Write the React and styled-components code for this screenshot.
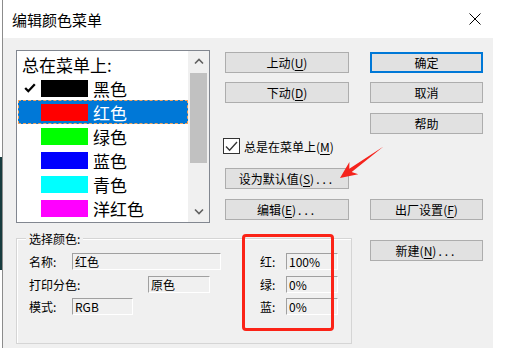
import React from 'react'
import styled, { createGlobalStyle } from 'styled-components'

const GlobalStyle = createGlobalStyle`
  * { box-sizing: border-box; }
  html, body { margin: 0; padding: 0; background: #fff; }
  body { font-family: "Noto Sans CJK SC", "Noto Sans", sans-serif; color: #000; }
`

const colors = [
  { name: '黑色', swatch: '#000000', checked: true },
  { name: '红色', swatch: '#ff0000', selected: true },
  { name: '绿色', swatch: '#00ff00' },
  { name: '蓝色', swatch: '#0000ff' },
  { name: '青色', swatch: '#00ffff' },
  { name: '洋红色', swatch: '#ff00ff' },
  { name: '黄色', swatch: '#ffff00' },
]

// Styled components
const Screen = styled.div`
  position: relative;
  width: 506px;
  height: 356px;
  overflow: hidden;
  display: flex;
  background: #fff;
`

const LeftStrip = styled.div`
  width: 2px;
  background: linear-gradient(to bottom, #fff 0 157px, #173c3f 157px 270px, #fff 270px);
`

const Window = styled.div`
  width: 491px;
  height: 348px;
  border-left: 1px solid #8c8c8c;
  display: flex;
  flex-direction: column;
`

const TitleBar = styled.div`
  height: 38px;
  background: #fff;
  display: flex;
  align-items: center;
  justify-content: space-between;
  padding: 0 12px 0 9px;
  font-size: 15px;
  line-height: 1;
`

const Body = styled.div`
  height: 310px;
  background: #f0f0f0;
  padding: 12px 0 0 13px;
  display: flex;
  gap: 18px;
  font-size: 12px;
`

const LeftCol = styled.div`
  width: 336px;
  display: flex;
  flex-direction: column;
`

const TopRow = styled.div`
  display: flex;
  gap: 15px;
`

const ListBox = styled.div`
  width: 194px;
  height: 173px;
  border: 1px solid #828790;
  background: #fff;
  display: flex;
  overflow: hidden;
`

const ListItems = styled.div`
  width: 171px;
  padding: 1px 0 0 1px;
  display: flex;
  flex-direction: column;
  overflow: hidden;
`

const ListHeader = styled.div`
  height: 24px;
  flex-shrink: 0;
  display: flex;
  align-items: center;
  padding-left: 4px;
  font-size: 17px;
`

const ListItem = styled.div`
  height: 24px;
  flex-shrink: 0;
  display: flex;
  align-items: center;
  font-size: 17px;
  border: 1px dashed ${p => (p.$selected ? '#f3a35c' : 'transparent')};
  background: ${p => (p.$selected ? '#0078d7' : 'transparent')};
  color: ${p => (p.$selected ? '#fff' : '#000')};
`

const CheckCell = styled.div`
  width: 22px;
  display: flex;
  justify-content: center;
  align-items: center;
`

const Swatch = styled.div`
  width: 47px;
  height: 17px;
  margin-right: 5px;
  background: ${p => p.$color};
`

const ScrollBar = styled.div`
  width: 21px;
  background: #f0f0f0;
  display: flex;
  flex-direction: column;
`

const ScrollButton = styled.div`
  height: 21px;
  display: flex;
  align-items: center;
  justify-content: center;
`

const ScrollThumb = styled.div`
  margin: 1px 2px 0;
  height: 90px;
  background: #c1c1c1;
`

const ScrollSpace = styled.div`
  flex: 1;
`

const ButtonCol = styled.div`
  width: ${p => p.$w}px;
  display: flex;
  flex-direction: column;
`

const Button = styled.div`
  height: 21px;
  margin-top: ${p => p.$mt || 0}px;
  background: #e1e1e1;
  border: 1px solid ${p => (p.$primary ? '#0078d7' : '#adadad')};
  box-shadow: ${p => (p.$primary ? 'inset 0 0 0 1px #0078d7' : 'none')};
  display: flex;
  align-items: center;
  justify-content: center;
  font-size: 12px;
  white-space: nowrap;

  u { text-underline-offset: 2px; }
`

const Dots = styled.span`
  letter-spacing: 3px;
  margin-left: 2px;
`

const CheckRow = styled.div`
  margin: 35px 0 0 -2px;
  height: 16px;
  display: flex;
  align-items: center;
  gap: 4px;
  white-space: nowrap;

  u { text-underline-offset: 2px; }
`

const CheckBox = styled.div`
  width: 17px;
  height: 16px;
  border: 1px solid #333;
  background: #fff;
  display: flex;
  align-items: center;
  justify-content: center;
`

const GroupBox = styled.div`
  position: relative;
  margin-top: 15px;
  width: 336px;
  height: 106px;
  border: 1px solid #d5d5d5;
  box-shadow: inset 1px 1px 0 #fff;
`

const Legend = styled.div`
  position: absolute;
  top: -9px;
  left: 9px;
  padding: 0 3px;
  line-height: 17px;
  background: #f0f0f0;
`

const GroupContent = styled.div`
  display: flex;
  padding: 14px 0 0 12px;
`

const Fields = styled.div`
  width: ${p => (p.$w ? `${p.$w}px` : 'auto')};
  display: grid;
  grid-auto-rows: 17px;
  row-gap: 5.5px;
`

const FieldRow = styled.div`
  display: flex;
  align-items: center;
`

const FieldLabel = styled.div`
  width: ${p => p.$w}px;
  white-space: nowrap;
`

const Field = styled.div`
  width: ${p => p.$w}px;
  height: 17px;
  background: #f0f0f0;
  border-top: 1px solid #a0a0a0;
  border-left: 1px solid #a0a0a0;
  border-right: 1px solid #fff;
  border-bottom: 1px solid #fff;
  padding-left: 2px;
  line-height: 15px;
  font-size: 12px;
  white-space: nowrap;
`

const RedFrame = styled.div`
  position: absolute;
  left: 242px;
  top: 234px;
  width: 92px;
  height: 97px;
  border: 3px solid #fb2317;
  border-radius: 4px;
`

const Arrow = styled.svg`
  position: absolute;
  left: 336px;
  top: 143px;
`

const Chevron = ({ down }) => (
  <svg width="10" height="7" viewBox="0 0 10 7">
    <path
      d={down ? 'M1 1.5 L5 5.5 L9 1.5' : 'M1 5.5 L5 1.5 L9 5.5'}
      fill="none"
      stroke="#606060"
      strokeWidth="1.6"
    />
  </svg>
)

const Btn = ({ label, letter, dots, ...rest }) => (
  <Button {...rest}>
    {label}
    {letter && (
      <>
        (<u>{letter}</u>)
      </>
    )}
    {dots && <Dots>...</Dots>}
  </Button>
)

const App = () => {
  return (
    <Screen>
      <GlobalStyle />
      <LeftStrip />
      <Window>
        <TitleBar>
          <span>编辑颜色菜单</span>
          <svg width="12" height="12" viewBox="0 0 12 12">
            <path d="M0.5 0.5 L11.5 11.5 M11.5 0.5 L0.5 11.5" stroke="#000" strokeWidth="1" />
          </svg>
        </TitleBar>
        <Body>
          <LeftCol>
            <TopRow>
              <ListBox>
                <ListItems>
                  <ListHeader>总在菜单上:</ListHeader>
                  {colors.map(c => (
                    <ListItem key={c.name} $selected={c.selected}>
                      <CheckCell>
                        {c.checked && (
                          <svg width="12" height="10" viewBox="0 0 12 10">
                            <path d="M1.2 5 L4.3 8.2 L10.8 1.2" fill="none" stroke="#000" strokeWidth="2.3" />
                          </svg>
                        )}
                      </CheckCell>
                      <Swatch $color={c.swatch} />
                      {c.name}
                    </ListItem>
                  ))}
                </ListItems>
                <ScrollBar>
                  <ScrollButton><Chevron /></ScrollButton>
                  <ScrollThumb />
                  <ScrollSpace />
                  <ScrollButton><Chevron down /></ScrollButton>
                </ScrollBar>
              </ListBox>
              <ButtonCol $w={124}>
                <Btn $mt={2} label="上动" letter="U" />
                <Btn $mt={9} label="下动" letter="D" />
                <CheckRow>
                  <CheckBox>
                    <svg width="13" height="11" viewBox="0 0 13 11">
                      <path d="M1 5.5 L4.6 9.3 L12 1" fill="none" stroke="#333" strokeWidth="1.3" />
                    </svg>
                  </CheckBox>
                  <span>
                    总是在菜单上(<u>M</u>)
                  </span>
                </CheckRow>
                <Btn $mt={14} label="设为默认值" letter="S" dots />
                <Btn $mt={10} label="编辑" letter="E" dots />
              </ButtonCol>
            </TopRow>
            <GroupBox>
              <Legend>选择颜色:</Legend>
              <GroupContent>
                <Fields $w={231}>
                  <FieldRow>
                    <FieldLabel $w={43}>名称:</FieldLabel>
                    <Field $w={149}>红色</Field>
                  </FieldRow>
                  <FieldRow>
                    <FieldLabel $w={119}>打印分色:</FieldLabel>
                    <Field $w={62}>原色</Field>
                  </FieldRow>
                  <FieldRow>
                    <FieldLabel $w={43}>模式:</FieldLabel>
                    <Field $w={61}>RGB</Field>
                  </FieldRow>
                </Fields>
                <Fields>
                  <FieldRow>
                    <FieldLabel $w={26}>红:</FieldLabel>
                    <Field $w={52}>100%</Field>
                  </FieldRow>
                  <FieldRow>
                    <FieldLabel $w={26}>绿:</FieldLabel>
                    <Field $w={52}>0%</Field>
                  </FieldRow>
                  <FieldRow>
                    <FieldLabel $w={26}>蓝:</FieldLabel>
                    <Field $w={52}>0%</Field>
                  </FieldRow>
                </Fields>
              </GroupContent>
            </GroupBox>
          </LeftCol>
          <ButtonCol $w={113}>
            <Btn $mt={2} $primary label="确定" />
            <Btn $mt={9} label="取消" />
            <Btn $mt={10} label="帮助" />
            <Btn $mt={65} label="出厂设置" letter="F" />
            <Btn $mt={20} label="新建" letter="N" dots />
          </ButtonCol>
        </Body>
      </Window>

      <RedFrame />
      <Arrow width="52" height="40" viewBox="0 0 52 40">
        <polygon
          points="47.5,3.5 15.7,29 22.2,31.2 4,35 13.4,19 13.3,25.8"
          fill="#f5231c"
        />
      </Arrow>
    </Screen>
  )
}

export default App
